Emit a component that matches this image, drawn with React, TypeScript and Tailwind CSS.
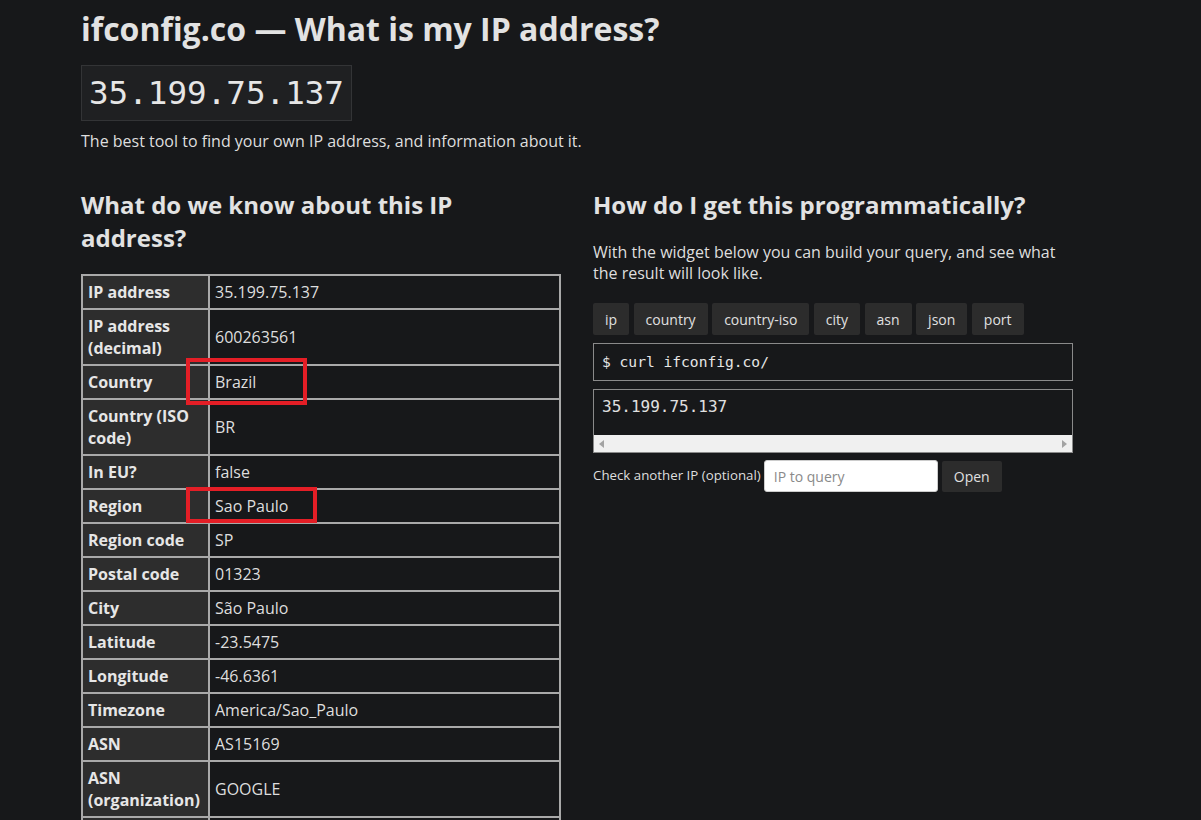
import React from "react";

const rows: [string, string][] = [
  ["IP address", "35.199.75.137"],
  ["IP address (decimal)", "600263561"],
  ["Country", "Brazil"],
  ["Country (ISO code)", "BR"],
  ["In EU?", "false"],
  ["Region", "Sao Paulo"],
  ["Region code", "SP"],
  ["Postal code", "01323"],
  ["City", "São Paulo"],
  ["Latitude", "-23.5475"],
  ["Longitude", "-46.6361"],
  ["Timezone", "America/Sao_Paulo"],
  ["ASN", "AS15169"],
  ["ASN (organization)", "GOOGLE"],
  ["User agent", "Mozilla/5.0"],
];

const buttons = ["ip", "country", "country-iso", "city", "asn", "json", "port"];

export default function App() {
  return (
    <div
      className="min-h-[820px] h-[820px] overflow-hidden bg-[#17181a] text-[#dedede] relative"
      style={{ fontFamily: '"Open Sans", "Liberation Sans", sans-serif' }}
    >
      <div className="ml-[81px] w-[992px]">
        <h1 className="text-[32px] font-bold leading-[38px] pt-[10px] text-[#e2e2e2]">
          ifconfig.co — What is my IP address?
        </h1>
        <div className="mt-[17px] inline-block bg-[#1f2022] border border-[#333436] px-[7px] py-[6px]">
          <code
            className="text-[32.6px] leading-[42px] text-[#e6e6e6]"
            style={{ fontFamily: '"DejaVu Sans Mono", "Liberation Mono", monospace' }}
          >
            35.199.75.137
          </code>
        </div>
        <p className="text-[16px] leading-[24px] mt-[8px]">
          The best tool to find your own IP address, and information about it.
        </p>

        <div className="flex gap-[32px] mt-[35px]">
          <div className="w-[480px] shrink-0">
            <h2 className="text-[24px] font-bold leading-[33px] text-[#e2e2e2]">
              What do we know about this IP address?
            </h2>
            <table className="mt-[20px] w-[480px] border-collapse border-2 border-[#a9a9a9] text-[16px] leading-[22px]">
              <tbody>
                {rows.map(([k, v]) => (
                  <tr key={k}>
                    <th className="w-[127px] border-2 border-[#a9a9a9] bg-[#2d2d2d] text-left font-bold px-[5px] py-[5px] align-middle text-[#e6e6e6]">
                      {k}
                    </th>
                    <td className="border-2 border-[#a9a9a9] px-[5px] py-[5px] align-middle">
                      {v}
                    </td>
                  </tr>
                ))}
              </tbody>
            </table>
          </div>

          <div className="w-[480px] shrink-0">
            <h2 className="text-[24px] font-bold leading-[33px] text-[#e2e2e2]">
              How do I get this programmatically?
            </h2>
            <p className="text-[16px] leading-[21px] mt-[21px]">
              With the widget below you can build your query, and see what the result will look like.
            </p>
            <div className="flex gap-[4.5px] mt-[19px]">
              {buttons.map((b) => (
                <div
                  key={b}
                  className="h-[32px] px-[12px] flex items-center bg-[#2c2c2c] rounded-[2px] text-[14px] text-[#e0e0e0]"
                >
                  {b}
                </div>
              ))}
            </div>
            <div
              className="mt-[8px] h-[38px] border border-[#8a8a8a] flex items-center px-[8px] text-[14.6px] text-[#e6e6e6]"
              style={{ fontFamily: '"DejaVu Sans Mono", "Liberation Mono", monospace' }}
            >
              $ curl ifconfig.co/
            </div>
            <div className="mt-[8px] border border-[#8a8a8a]">
              <div
                className="h-[45px] px-[8px] pt-[6px] text-[16px] leading-[22px] text-[#e0e0e0]"
                style={{ fontFamily: '"DejaVu Sans Mono", "Liberation Mono", monospace' }}
              >
                35.199.75.137
              </div>
              <div className="h-[17px] bg-[#f0f0f0] flex items-center justify-between px-[5px]">
                <svg width="6" height="8" viewBox="0 0 6 8">
                  <path d="M5 0 L0 4 L5 8 Z" fill="#a3a3a3" />
                </svg>
                <svg width="6" height="8" viewBox="0 0 6 8">
                  <path d="M1 0 L6 4 L1 8 Z" fill="#a3a3a3" />
                </svg>
              </div>
            </div>
            <div className="flex items-center mt-[7px] text-[13.3px]">
              <span className="mr-[3px]">Check another IP (optional)</span>
              <div className="w-[174px] h-[32px] bg-white rounded-[3px] border border-[#ccc] flex items-center px-[9px] text-[14px] text-[#8a8a8a]">
                IP to query
              </div>
              <div className="ml-[4px] h-[31px] w-[60px] bg-[#2c2c2c] rounded-[2px] flex items-center justify-center text-[14px] text-[#e0e0e0]">
                Open
              </div>
            </div>
          </div>
        </div>
      </div>

      <div className="absolute left-[186px] top-[358px] w-[121px] h-[47px] border-4 border-[#e41e26]" />
      <div className="absolute left-[186px] top-[487px] w-[131px] h-[36px] border-4 border-[#e41e26]" />
    </div>
  );
}
